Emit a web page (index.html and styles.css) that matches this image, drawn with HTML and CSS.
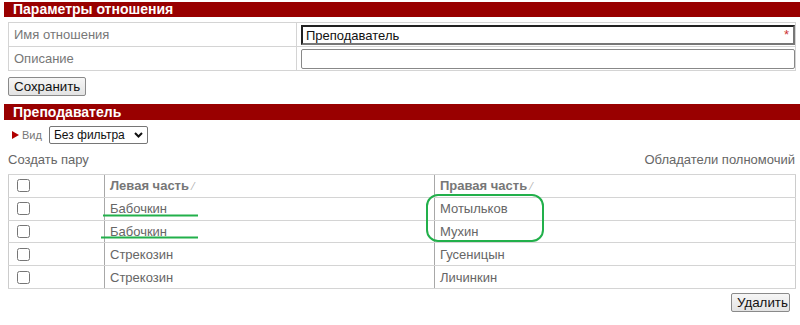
FILE: index.html
```html
<!DOCTYPE html>
<html lang="ru">
<head>
    <meta charset="UTF-8">
    <title>Параметры отношения</title>
    <link rel="stylesheet" href="styles.css">
</head>
<body>

<div class="bar">Параметры отношения</div>
<div class="content">
    <table class="params">
        <tr>
            <td class="lbl">Имя отношения</td>
            <td class="fld">
                <div class="req-wrap">
                    <input type="text" class="req" value="Преподаватель">
                    <span class="star">*</span>
                </div>
            </td>
        </tr>
        <tr>
            <td class="lbl">Описание</td>
            <td class="fld"><input type="text" class="plain"></td>
        </tr>
    </table>
    <button type="button" class="btn save">Сохранить</button>
</div>

<div class="bar second">Преподаватель</div>
<div class="content">
    <div class="view">
        <span class="tri"></span>
        <span class="vid">Вид</span>
        <div class="select-wrap">
            <select class="filter">
                <option>Без фильтра</option>
            </select>
            <svg class="chev" width="9" height="6" viewBox="0 0 9 6"><path d="M1 1 L4.5 4.5 L8 1" /></svg>
        </div>
    </div>
    <div class="links">
        <span>Создать пару</span>
        <span>Обладатели полномочий</span>
    </div>
    <table class="pairs">
        <tr>
            <th class="chk"><input type="checkbox"></th>
            <th class="left">Левая часть <span class="sort">⁄</span></th>
            <th>Правая часть <span class="sort">⁄</span></th>
        </tr>
        <tr>
            <td class="chk"><input type="checkbox"></td>
            <td>Бабочкин</td>
            <td>Мотыльков</td>
        </tr>
        <tr>
            <td class="chk"><input type="checkbox"></td>
            <td>Бабочкин</td>
            <td>Мухин</td>
        </tr>
        <tr>
            <td class="chk"><input type="checkbox"></td>
            <td>Стрекозин</td>
            <td>Гусеницын</td>
        </tr>
        <tr>
            <td class="chk"><input type="checkbox"></td>
            <td>Стрекозин</td>
            <td>Личинкин</td>
        </tr>
    </table>
    <div class="actions">
        <button type="button" class="btn">Удалить</button>
    </div>
</div>

<!-- green marks drawn over the table -->
<svg class="marks" width="800" height="325" viewBox="0 0 800 325">
    <line x1="103" y1="215.5" x2="198" y2="215.5" />
    <line x1="101" y1="237.5" x2="198" y2="237.5" />
    <rect x="427" y="195" width="116" height="46" rx="11" ry="11" />
</svg>

</body>
</html>
```

FILE: styles.css
```css
body {
    margin: 0;
    font-family: "Liberation Sans", Arial, sans-serif;
    font-size: 13px;
    color: #666;
    position: relative;
    width: 800px;
    height: 325px;
    overflow: hidden;
}
.bar {
    margin: 2px 0 0 4px;
    height: 15px;
    line-height: 15px;
    padding-left: 9px;
    background-color: #990000;
    color: white;
    font-weight: bold;
    font-size: 14px;
}
.bar.second {
    margin-top: 8px;
    height: 16px;
    line-height: 16px;
}
.content {
    padding: 0 4px 0 8px;
}
table {
    width: 100%;
    border-collapse: collapse;
}
.params {
    margin-top: 5px;
    border: 1px solid #ccc;
}
.params td {
    height: 23px;
    padding: 0;
    border: 1px solid #d4d4d4;
    vertical-align: middle;
}
.params .lbl {
    width: 282px;
    padding-left: 5px;
    color: #777;
}
.params .fld {
    padding: 0 0 0 4px;
}
.req-wrap {
    position: relative;
}
.params input {
    display: block;
    box-sizing: border-box;
    width: 100%;
    height: 20px;
    margin: 0;
    padding: 0 3px;
    font-family: "Liberation Sans", Arial, sans-serif;
    font-size: 13px;
    color: #111;
    background: white;
}
.params input.req {
    margin-top: 1px;
    border: 2px solid #222;
    border-right-color: #777;
    border-bottom-color: #777;
    padding-left: 3px;
}
.params input.plain {
    border: 1px solid #888;
    border-radius: 2px;
}
.star {
    position: absolute;
    right: 6px;
    top: 3px;
    color: #c33;
    font-size: 13px;
    line-height: 13px;
}
.btn {
    font-family: "Liberation Sans", Arial, sans-serif;
    font-size: 13.33px;
    color: #111;
    height: 19px;
    padding: 0 5px;
    background: linear-gradient(#f6f6f6, #e3e3e3);
    border: 1px solid #8a8a8a;
    border-radius: 2px;
}
.save {
    margin-top: 6px;
    width: 78px;
}
.view {
    display: flex;
    align-items: center;
    margin-top: 6px;
    height: 18px;
}
.tri {
    width: 0;
    height: 0;
    margin-left: 4px;
    border-top: 4px solid transparent;
    border-bottom: 4px solid transparent;
    border-left: 7px solid #b00000;
}
.vid {
    margin-left: 3px;
    font-size: 11px;
    color: #777;
}
.select-wrap {
    position: relative;
    margin-left: 7px;
}
.filter {
    display: block;
    appearance: none;
    -webkit-appearance: none;
    box-sizing: border-box;
    width: 99px;
    height: 18px;
    padding: 0 0 0 4px;
    font-family: "Liberation Sans", Arial, sans-serif;
    font-size: 12px;
    color: #111;
    border: 1px solid #767676;
    border-radius: 2px;
    background: white;
}
.chev {
    position: absolute;
    right: 5px;
    top: 6px;
    fill: none;
    stroke: #111;
    stroke-width: 2;
}
.links {
    display: flex;
    justify-content: space-between;
    margin-top: 8px;
    line-height: 16px;
    padding-right: 1px;
}
.pairs {
    margin-top: 6px;
    border: 1px solid #ccc;
}
.pairs th, .pairs td {
    height: 21.8px;
    padding: 0 0 0 5px;
    border-top: 1px solid #d4d4d4;
    border-bottom: 1px solid #d4d4d4;
    border-left: 1px solid #a8a8a8;
    text-align: left;
    vertical-align: middle;
}
.pairs th {
    color: #777;
    font-weight: bold;
}
.pairs .chk {
    width: 91px;
    padding-left: 4px;
    border-left: none;
}
.pairs .left {
    width: 324px;
}
.pairs input {
    display: block;
    margin: 0 0 0 4px;
    width: 13px;
    height: 13px;
}
.sort {
    font-weight: normal;
    font-size: 10px;
    color: #aaa;
}
.actions {
    display: flex;
    justify-content: flex-end;
    margin-top: 4px;
    padding-right: 6px;
}
.actions .btn {
    width: 59px;
}
.marks {
    position: absolute;
    left: 0;
    top: 0;
    fill: none;
    stroke: #22b04b;
    stroke-width: 2;
}
```
